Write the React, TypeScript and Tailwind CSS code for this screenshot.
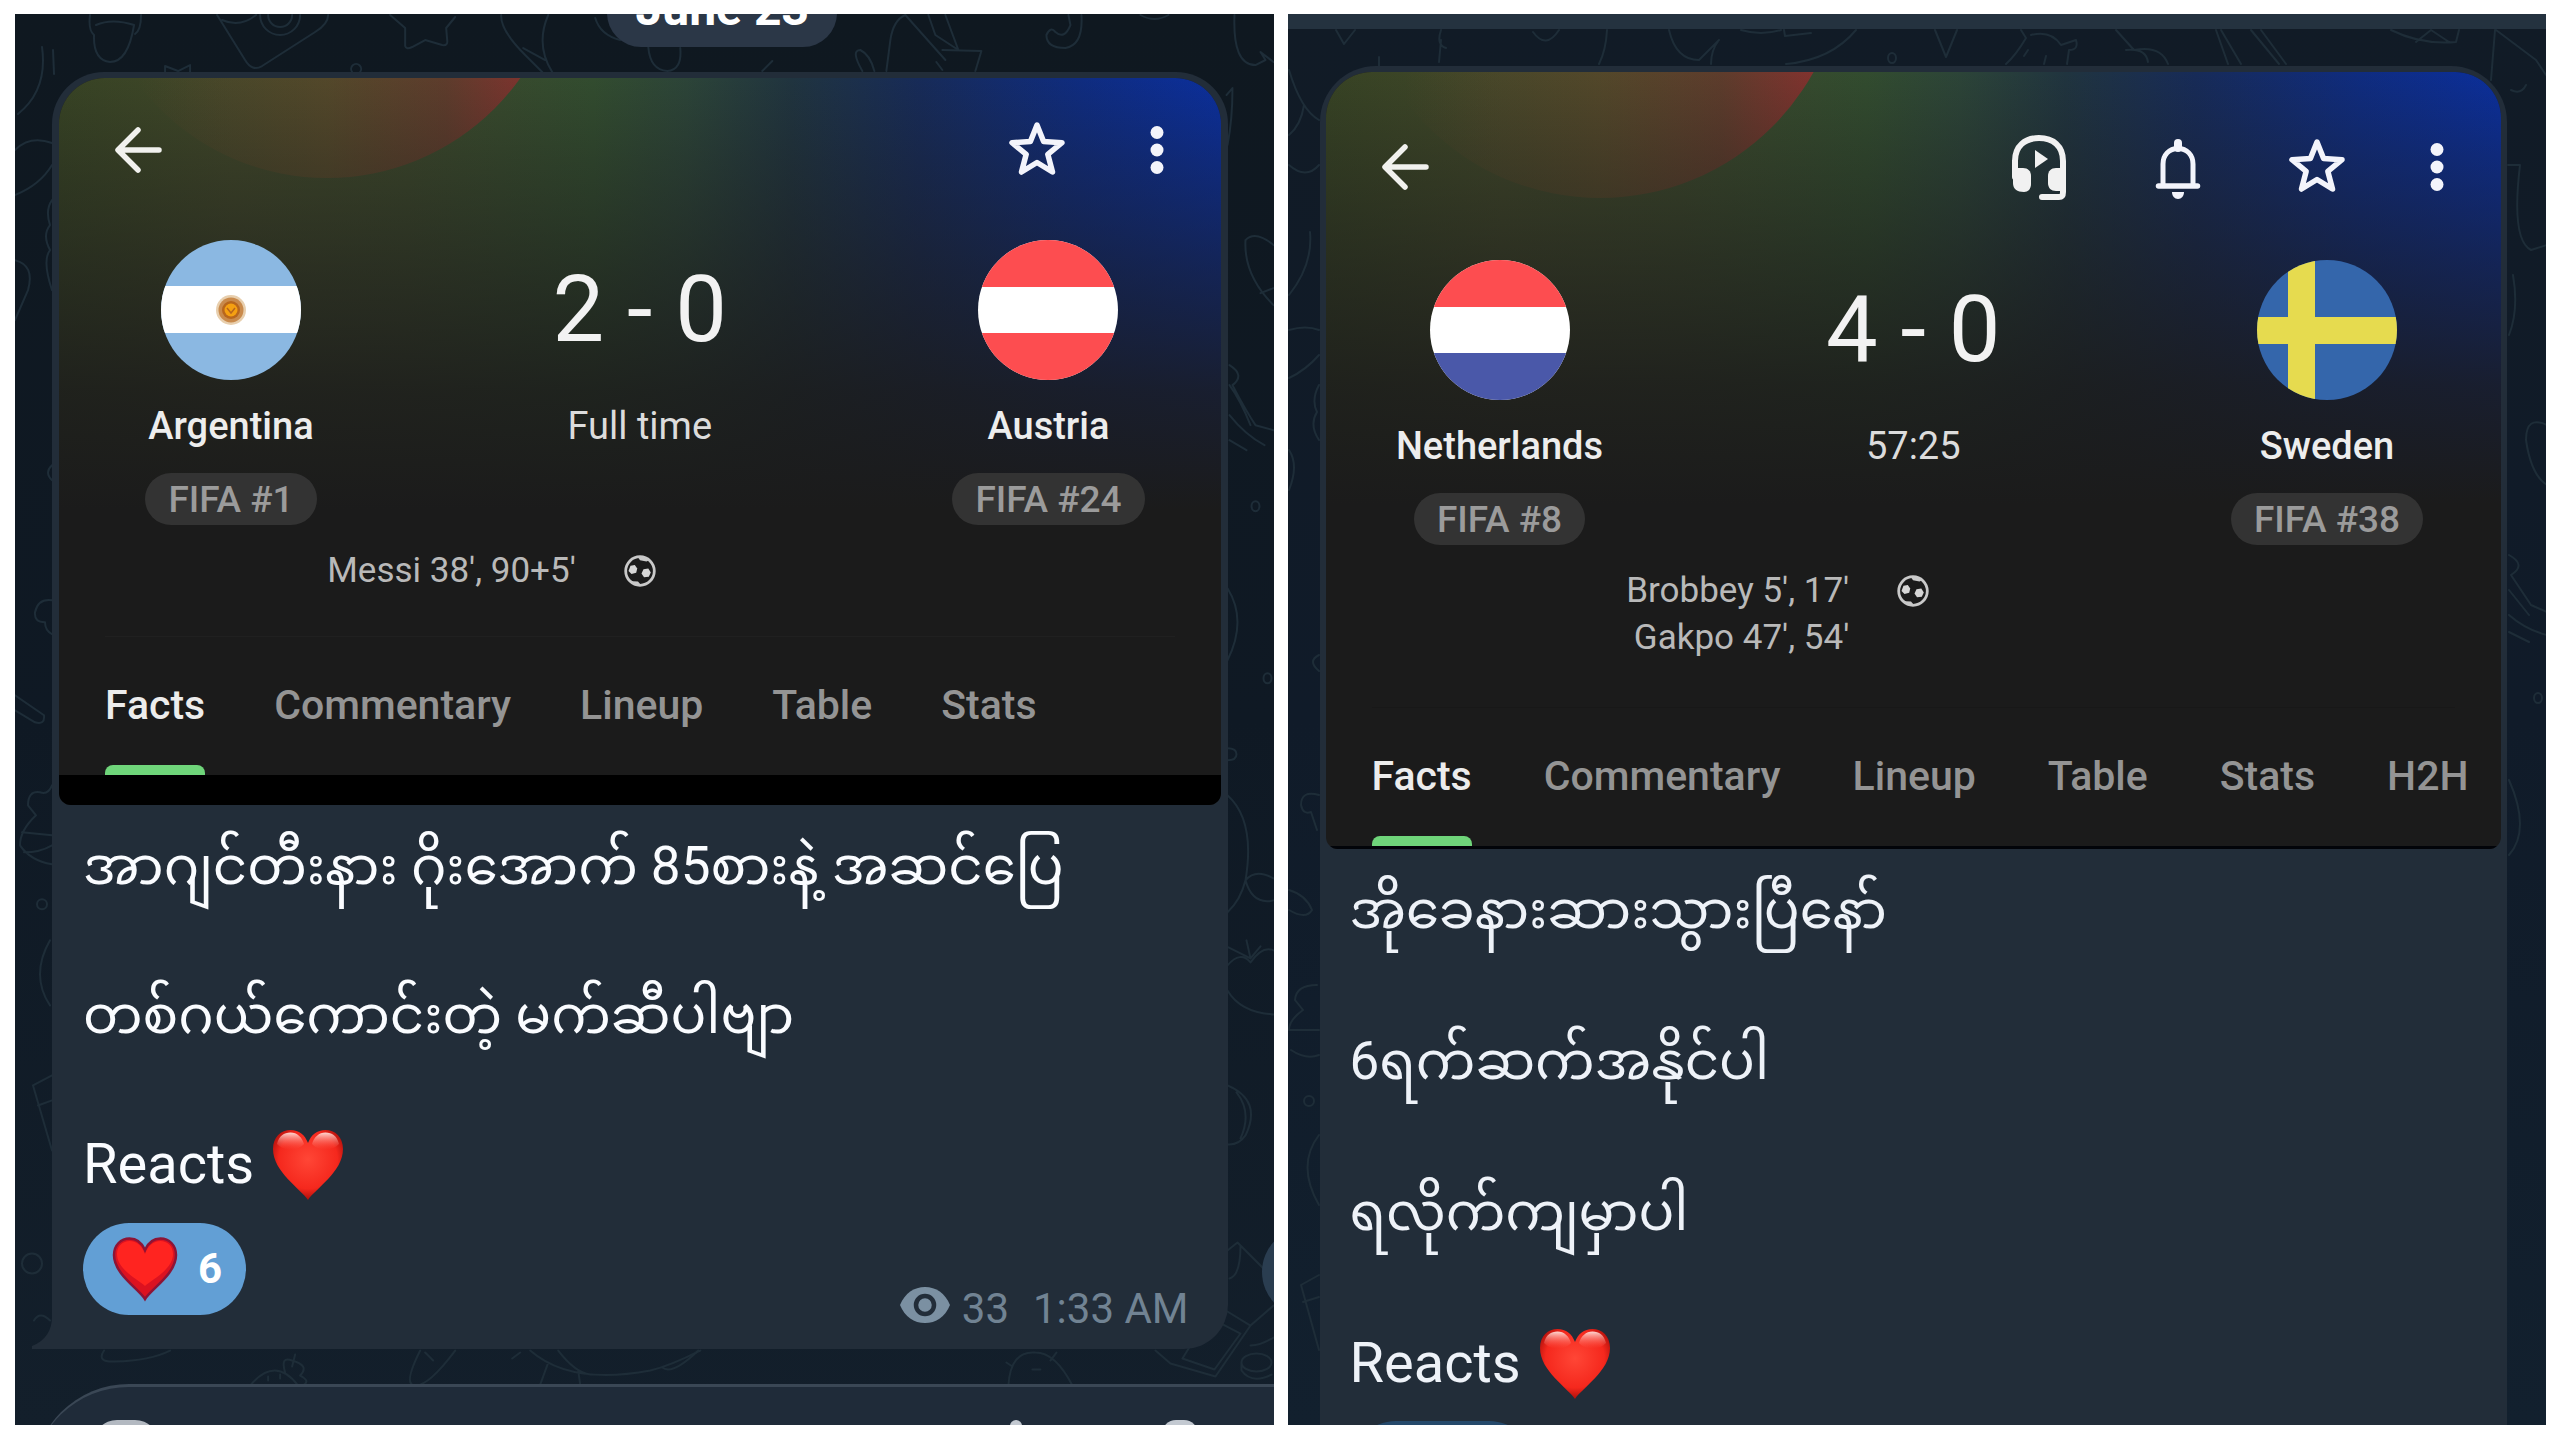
import React from "react";

type IconName = "headset" | "bell" | "star";

type Team = { name: string; rank: string; flag: React.ReactNode };

type Match = {
  home: Team;
  away: Team;
  score: string;
  status: string;
  scorers: string[];
  actions: IconName[];
  tabs: string[];
};

type CardStyles = { header: string; glow: string; teams: string; divider: string; tabs: string; footer: string };

function ArrowIcon() {
  return (
    <svg viewBox="0 0 64 64" className="size-16" fill="none" stroke="#f1f1ee" strokeWidth="5.5" strokeLinecap="round" strokeLinejoin="round" aria-hidden="true">
      <path d="M52 32H12M31 12L11 32l20 20" />
    </svg>
  );
}

function StarIcon() {
  return (
    <svg viewBox="0 2 64 64" className="size-16" fill="none" stroke="#f3f4fb" strokeWidth="5.5" strokeLinejoin="round" aria-hidden="true">
      <path d="M32 9l6.600 16.500 18.400 1.200-14.200 11.600L47.500 56 32 46.500 16.500 56l4.700-17.700L7 26.700l18.400-1.200z" />
    </svg>
  );
}

function BellIcon() {
  return (
    <svg viewBox="0 0 64 64" className="size-16" fill="none" stroke="#f3f4fb" strokeWidth="5" strokeLinecap="round" aria-hidden="true">
      <path d="M17 50V29c0-9 6-15.500 15-15.500S47 20 47 29v21" />
      <path d="M12.500 51h39" strokeWidth="5.500" />
      <path d="M32 13V8" strokeWidth="8" />
      <path d="M26 57h12c0 4-2.500 7-6 7s-6-3-6-7z" fill="#f3f4fb" stroke="none" />
    </svg>
  );
}

function HeadsetIcon() {
  return (
    <svg viewBox="0 0 64 64" className="size-16 overflow-visible" fill="none" stroke="#f1f1f1" strokeWidth="6" strokeLinecap="round" aria-hidden="true">
      <path d="M8 42V26C8 11 18 3 32 3s24 8 24 23v31c0 3-1 5-4 5H35" />
      <path d="M6 33h10c5 0 8 3 8 8v8c0 5-3 8-7 8-7 0-11-3-11-9z" fill="#f1f1f1" stroke="none" />
      <path d="M58 33H49c-5 0-8 3-8 8v7c0 5 3 8 8 8h9z" fill="#f1f1f1" stroke="none" />
      <path d="M28 15l13 9-13 9z" fill="#f1f1f1" stroke="none" />
    </svg>
  );
}

function DotsIcon() {
  return (
    <svg viewBox="0 0 64 64" className="size-16" fill="#f3f4fb" aria-hidden="true">
      <circle cx="32" cy="14.500" r="6.500" />
      <circle cx="32" cy="32" r="6.500" />
      <circle cx="32" cy="49.500" r="6.500" />
    </svg>
  );
}

function BallIcon() {
  return (
    <svg viewBox="0 0 32 32" className="size-8" role="img" aria-label="Goals">
      <circle cx="16" cy="16" r="14.300" fill="none" stroke="#c9c9c9" strokeWidth="2.800" />
      <path d="M6.500 10.800l4.300-.8 2.400 3.400-1 4.400-4.700 1.200-3-3z" fill="#d6d6d6" />
      <path d="M19.500 14.200l4.800-.6 2.500 4-2 4.200-4.800.4-2.500-3.800z" fill="#d6d6d6" />
      <path d="M13.500 1.500l2.500 3.700 6.500 1.200 3-1.400-5-3.500zM5.500 25l3.500 1.200 5 .2 3 3.600-6 .5z" fill="#c9c9c9" />
    </svg>
  );
}

function GlossyHeart() {
  return (
    <svg viewBox="0 0 72 72" className="size-[72px]" role="img" aria-label="Red heart">
      <defs>
        <radialGradient id="heartBody" cx="50%" cy="42%" r="60%">
          <stop offset="0" stopColor="#ff4636" />
          <stop offset="0.700" stopColor="#f5281d" />
          <stop offset="1" stopColor="#a50c08" />
        </radialGradient>
        <linearGradient id="heartShine" x1="0" x2="0" y1="0" y2="1">
          <stop offset="0" stopColor="#ffe1dc" stopOpacity="0.950" />
          <stop offset="1" stopColor="#ff5a4c" stopOpacity="0" />
        </linearGradient>
      </defs>
      <path d="M36 71C29 60 1 43 1 20 1 8 9 1 18.500 1 27 1 33 6 36 14 39 6 45 1 53.500 1 63 1 71 8 71 20c0 23-28 40-35 51z" fill="url(#heartBody)" />
      <path d="M5 15C7 7 12 3.500 18.500 3.500S30 8 32 15c-6 7-20 8-27 0zM67 15C65 7 60 3.500 53.500 3.500S42 8 40 15c6 7 20 8 27 0z" fill="url(#heartShine)" />
    </svg>
  );
}

function ReactionHeart() {
  return (
    <svg viewBox="0 0 66 66" className="size-[66px]" role="img" aria-label="Heart">
      <path d="M33 63C27 53 2 38 2 19 2 9 9 2.500 17.500 2.500 25 2.500 30 7 33 14 36 7 41 2.500 48.500 2.500 57 2.500 64 9 64 19c0 19-25 34-31 44z" fill="#dc1220" stroke="#8d1436" strokeWidth="2.500" />
      <path d="M33 50C27 44 5 34 5 18 5 10 11 5 17.500 5 25 5 30 10 33 18 36 10 41 5 48.500 5 55 5 61 10 61 18c0 16-22 26-28 32z" fill="#ff2420" />
    </svg>
  );
}

function EyeIcon() {
  return (
    <svg viewBox="0 0 50 36" className="h-9 w-[50px]" role="img" aria-label="Views">
      <path d="M0 18C5 6 14 0 25 0s20 6 25 18c-5 12-14 18-25 18S5 30 0 18z" fill="#7b90a2" />
      <circle cx="25" cy="18" r="9" fill="none" stroke="#222d39" strokeWidth="4.500" />
    </svg>
  );
}

function ArgentinaFlag() {
  return (
    <svg viewBox="0 0 140 140" className="size-full" role="img" aria-label="Flag of Argentina">
      <rect width="140" height="140" fill="#8bb8e2" />
      <rect y="46" width="140" height="47" fill="#fff" />
      <circle cx="70" cy="70" r="15" fill="#e8cfae" />
      <circle cx="70" cy="70" r="12.500" fill="#c98a4c" />
      <circle cx="70" cy="70" r="9" fill="#b8661c" />
      <circle cx="70" cy="70" r="6.500" fill="#f5a012" />
      <path d="M66 68l4 5 4-5" fill="none" stroke="#b8661c" strokeWidth="1.500" />
    </svg>
  );
}

function StripedFlag({ label, top, bottom }: { label: string; top: string; bottom: string }) {
  return (
    <svg viewBox="0 0 140 140" className="size-full" role="img" aria-label={label}>
      <rect width="140" height="140" fill="#fff" />
      <rect width="140" height="47" fill={top} />
      <rect y="93" width="140" height="47" fill={bottom} />
    </svg>
  );
}

function SwedenFlag() {
  return (
    <svg viewBox="0 0 140 140" className="size-full" role="img" aria-label="Flag of Sweden">
      <rect width="140" height="140" fill="#3466ab" />
      <path d="M31 0h27v57h82v27H58v56H31V84H0V57h31z" fill="#e6db4f" />
    </svg>
  );
}

const ICONS: Record<IconName, { label: string; icon: React.ReactNode }> = {
  headset: { label: "Audio commentary", icon: <HeadsetIcon /> },
  bell: { label: "Notifications", icon: <BellIcon /> },
  star: { label: "Favourite", icon: <StarIcon /> },
};

const LEFT_DOODLES = [
  "M90 15Q88 30 94 35Q93 60 110 62Q128 62 134 25Q112 18 96 25M141 15Q141 30 135 34",
  "M217 15L245 60Q252 72 262 66L315 32Q328 24 328 15M260 15a20 20 0 0 0 40 0M268 15a12 12 0 0 0 24 0M222 20q18 8 34-5",
  "M390 15L405 28V46Q406 50 412 47L425 40L442 45Q448 46 447 40L446 28L455 17",
  "M501 15Q500 30 525 55L542 72M548 15Q535 45 552 72M523 48L545 60M595 18Q600 35 620 40",
  "M42 47Q48 90 18 114M53 50L54 74M15 150Q30 135 52 143M15 195Q40 185 52 165M165 72V66L178 71L190 65V72",
  "M352 72a5 5 0 1 1 8 0M15 260Q35 265 28 290L15 320M52 200Q45 210 50 225Q42 235 50 250Q42 260 52 290M52 465Q44 472 52 480",
  "M648 47Q650 70 667 71Q682 70 680 48M762 71L772 61M886 71L890 40Q893 20 905 15L945 60M928 15L935 35L958 50M958 50L945 15",
  "M942 50L981 51L975 71M936 62L942 70M862 71Q850 50 860 50Q870 55 874 71M1046 35Q1046 48 1065 48Q1083 45 1081 15M1046 35Q1050 26 1055 32Q1064 40 1070 25L1068 15M1140 15q14 8 28 0",
  "M1234 15Q1232 65 1255 65L1265 60L1260 52L1273 62M1226 95L1232 88Q1232 120 1227 145M1245 240Q1255 230 1273 245M1245 240Q1243 275 1273 305M1260 293l13 -5",
  "M1229 365Q1245 375 1232 385Q1245 410 1255 425L1273 430M1229 385Q1240 400 1250 425M1229 415Q1245 435 1264 445M1229 440L1246 450",
  "M1251 506a4 5 0 1 0 8 0a4 5 0 1 0-8 0M1227 588Q1247 620 1227 660M1263 678a4 5 0 1 0 8 0a4 5 0 1 0-8 0M1227 748q9 0 9 6t-9 6",
  "M1227 795Q1255 820 1245 880Q1240 900 1227 912M1245 880Q1252 905 1273 900M1245 880Q1255 868 1273 878",
  "M52 600Q38 598 35 612Q34 622 45 622Q45 630 52 634M15 695L44 715Q45 725 35 722L15 710",
  "M52 785Q48 795 40 792Q28 790 28 805L36 815Q20 830 20 845Q30 860 52 864M22 832L52 835M24 852Q40 852 52 845M37 904a5 5 0 1 0 10 0a5 5 0 1 0-10 0",
  "M50 940Q30 975 50 1005M52 1075L33 1085L52 1150M38 1105L52 1100M22 1263a10 10 0 1 0 20 0a10 10 0 1 0-20 0M34 1320Q40 1310 50 1320",
  "M104 1350Q96 1362 115 1361Q150 1360 170 1350M250 1385Q275 1355 298 1385M285 1372Q280 1355 292 1360Q310 1365 300 1375Q310 1380 304 1384M292 1366l3-12M268 1376v4M280 1374v4",
  "M420 1350Q405 1380 412 1384Q425 1390 455 1350M425 1352l8 8M512 1358L520 1352M530 1350Q570 1385 650 1370Q670 1365 700 1350M558 1350Q575 1372 590 1374M548 1362L540 1384M578 1370l2 14",
  "M662 1367Q672 1375 698 1350M1008 1385Q1010 1350 1035 1352Q1055 1352 1072 1385M1032 1369h8M1050 1360l6-8M1006 1362l6 4",
  "M1227 965Q1240 950 1250 962Q1262 945 1273 950M1227 990Q1240 1012 1273 1014M1250 958L1228 947M1250 958L1246 940M1250 958l10-12",
  "M1227 1085Q1262 1100 1245 1135Q1238 1145 1227 1144M1236 1092q16 20 4 46M1227 1250L1237 1242L1265 1270M1240 1245Q1240 1275 1229 1278",
  "M1155 1350L1170 1363L1215 1376L1250 1325L1222 1308M1190 1345L1182 1358L1214 1369L1240 1333L1215 1320M1241 1362a15 9 0 1 0 30 0a15 9 0 1 0-30 0v8q10 14 30 4M1250 1345q10 0 23-8M1250 1325l23-20",
];

const RIGHT_DOODLES = [
  "M1335 30L1343 44L1354 30M1440 30Q1435 45 1445 48M1440 40L1438 62M1532 32Q1545 50 1558 30M1606 30Q1605 50 1598 64",
  "M1668 30Q1675 60 1698 60L1718 40Q1710 50 1710 64M1855 30Q1830 60 1785 64M1783 30L1784 36L1810 33M1740 30q20 6 40 0M1887 58a4 5 0 1 0 8 0a4 5 0 1 0-8 0",
  "M1378 57v10M1288 70Q1300 110 1318 120M1288 135Q1300 125 1303 105M1288 165Q1305 180 1318 165M1309 232Q1312 265 1288 295",
  "M1288 330Q1305 325 1318 330M1288 378Q1305 370 1318 355M1318 385Q1310 400 1316 412Q1308 425 1318 440M1288 450q10 15 0 40",
  "M1934 30L1945 57L1956 30M2005 64Q2015 55 2025 38L2020 30M2030 35Q2050 30 2060 45L2075 40Q2078 50 2068 50L2066 64M2027 50l-4 6M2045 56l-2 8",
  "M2115 30L2133 50Q2160 45 2167 64M2125 50Q2145 48 2147 62M2215 30L2227 64M2220 30L2240 64M2250 30L2278 64M2260 30L2285 64",
  "M2390 30Q2420 45 2455 42L2458 30M2415 42L2430 30M2430 30l18 12M2494 30L2490 80M2495 30L2535 60L2545 75M2510 90Q2520 95 2525 85",
  "M2507 165h12Q2510 240 2530 250L2546 245M2512 275Q2518 310 2508 335M2546 425Q2525 415 2525 440Q2530 475 2546 485",
  "M2508 555Q2526 565 2510 575Q2520 590 2530 605L2546 612M2508 590L2528 615M2508 615Q2525 630 2546 635M2508 632L2528 642M2533 698a4 5 0 1 0 8 0a4 5 0 1 0-8 0M2508 780Q2530 830 2508 855",
  "M1318 655q-12 6 0 16M1318 795Q1300 790 1300 805Q1302 815 1310 812L1316 830M1288 890Q1305 895 1311 910Q1305 920 1288 910",
  "M1316 985Q1295 985 1294 1000L1302 1010Q1288 1020 1288 1030H1318M1290 1050Q1305 1060 1318 1055M1303 1101a5 5 0 1 0 10 0a5 5 0 1 0-10 0",
  "M1318 1135Q1295 1165 1318 1205M1318 1275L1300 1285L1318 1350M1302 1302L1318 1297",
];

function Wallpaper({ paths, viewBox }: { paths: string[]; viewBox: string }) {
  return (
    <svg viewBox={viewBox} preserveAspectRatio="xMinYMin slice" className="absolute inset-0 size-full" fill="none" stroke="#1e2d38" strokeWidth="2" strokeLinecap="round" strokeLinejoin="round" aria-hidden="true">
      {paths.map((d) => (
        <path key={d} d={d} />
      ))}
    </svg>
  );
}

function TeamColumn({ team }: { team: Team }) {
  return (
    <div className="flex w-60 flex-col items-center">
      <div className="size-[140px] overflow-hidden rounded-full">{team.flag}</div>
      <h2 className="mt-[22px] text-[38px] leading-[48px] font-medium whitespace-nowrap text-[#ededed]">{team.name}</h2>
      <span className="mt-[23px] flex h-[52px] items-center rounded-full bg-[#333333] px-[23px] text-[37px] leading-none font-medium whitespace-nowrap text-[#9b9b9b]">
        {team.rank}
      </span>
    </div>
  );
}

function MatchCard({ match, styles }: { match: Match; styles: CardStyles }) {
  return (
    <section className="relative overflow-hidden rounded-t-[46px] rounded-b-[12px] bg-[#1b1b1b] font-['Roboto',sans-serif]">
      <div className="absolute inset-x-0 top-0 h-[460px] overflow-hidden" aria-hidden="true">
        <div className="absolute inset-0 bg-[linear-gradient(to_right,#374324_0%,#404729_15%,#3c482b_30%,#324c2f_46%,#2c4438_54%,#20343f_63%,#172b58_74%,#0f2c80_88%,#0b2f9c_100%)]" />
        <div className={styles.glow} />
        <div className="absolute inset-0 bg-[linear-gradient(to_bottom,#1b1b1b00_0%,#1b1b1b40_18%,#1b1b1b8c_42%,#1b1b1bd6_68%,#1b1b1b_94%)]" />
      </div>

      <div className="relative">
        <header className={styles.header}>
          <button type="button" aria-label="Back">
            <ArrowIcon />
          </button>
          <div className="flex items-center">
            <div className="flex gap-[75px]">
              {match.actions.map((name) => (
                <button key={name} type="button" aria-label={ICONS[name].label}>
                  {ICONS[name].icon}
                </button>
              ))}
            </div>
            <button type="button" aria-label="More options" className="ml-14">
              <DotsIcon />
            </button>
          </div>
        </header>

        <div className={styles.teams}>
          <TeamColumn team={match.home} />
          <div className="flex flex-col items-center">
            <div className="flex h-[140px] items-center text-[92px] leading-none whitespace-nowrap text-[#f2f2f2]">{match.score}</div>
            <p className="mt-[22px] text-[38px] leading-[48px] whitespace-nowrap text-[#dcdcdc]">{match.status}</p>
          </div>
          <TeamColumn team={match.away} />
        </div>

        <div className="mt-[22px] grid grid-cols-[1fr_auto_1fr] gap-12">
          <ul className="text-right text-[35px] leading-[47px] text-[#b9b9b9]">
            {match.scorers.map((scorer) => (
              <li key={scorer}>{scorer}</li>
            ))}
          </ul>
          <div className="pt-2">
            <BallIcon />
          </div>
        </div>

        <div className={styles.divider} />

        <nav className={styles.tabs}>
          {match.tabs.map((tab, i) => (
            <button
              key={tab}
              type="button"
              className={
                i === 0
                  ? "relative h-[138px] text-[41px] font-medium whitespace-nowrap text-[#ececec]"
                  : "h-[138px] text-[41px] font-medium whitespace-nowrap text-[#949494]"
              }
            >
              {tab}
              {i === 0 && <span className="absolute inset-x-0 bottom-0 h-[10px] rounded-t-[8px] bg-[#6fd57a]" />}
            </button>
          ))}
        </nav>
        <div className={styles.footer} />
      </div>
    </section>
  );
}

function ReactsLine() {
  return (
    <p className="flex items-center gap-[18px] text-[56px]">
      Reacts <GlossyHeart />
    </p>
  );
}

const ARGENTINA_AUSTRIA: Match = {
  home: { name: "Argentina", rank: "FIFA #1", flag: <ArgentinaFlag /> },
  away: { name: "Austria", rank: "FIFA #24", flag: <StripedFlag label="Flag of Austria" top="#fd4d50" bottom="#fd4d50" /> },
  score: "2 - 0",
  status: "Full time",
  scorers: ["Messi 38', 90+5'"],
  actions: ["star"],
  tabs: ["Facts", "Commentary", "Lineup", "Table", "Stats"],
};

const NETHERLANDS_SWEDEN: Match = {
  home: { name: "Netherlands", rank: "FIFA #8", flag: <StripedFlag label="Flag of the Netherlands" top="#fd4d50" bottom="#4a58a9" /> },
  away: { name: "Sweden", rank: "FIFA #38", flag: <SwedenFlag /> },
  score: "4 - 0",
  status: "57:25",
  scorers: ["Brobbey 5', 17'", "Gakpo 47', 54'"],
  actions: ["headset", "bell", "star"],
  tabs: ["Facts", "Commentary", "Lineup", "Table", "Stats", "H2H"],
};

const FINISHED_STYLES: CardStyles = {
  header: "flex items-center justify-between pt-[40px] pr-8 pl-12",
  glow: "absolute -top-[374px] left-[31px] size-[474px] rounded-full bg-[linear-gradient(to_right,#5a482800_10%,#5c482ab3_50%,#643a2cd9_75%,#8a302f_98%)]",
  teams: "mt-[58px] flex justify-between px-[52px]",
  divider: "mx-[46px] mt-[42px] h-px bg-[#202020]",
  tabs: "flex gap-[69px] overflow-hidden px-[46px]",
  footer: "h-[30px] bg-black",
};

const LIVE_STYLES: CardStyles = {
  header: "flex items-center justify-between pt-[63px] pr-8 pl-12",
  glow: "absolute -top-[362px] left-[30px] size-[488px] rounded-full bg-[linear-gradient(to_right,#5a482800_10%,#5c482ab3_50%,#643a2cd9_75%,#8a302f_98%)]",
  teams: "mt-[61px] flex justify-between px-[54px]",
  divider: "mx-[46px] mt-[46px] h-px bg-[#181818]",
  tabs: "flex gap-[72px] overflow-hidden px-[46px]",
  footer: "h-[3px] bg-[#020409]",
};

export default function App() {
  return (
    <main className="grid h-screen grid-cols-2 gap-[14px] bg-white pt-[14px] pr-[14px] pb-[15px] pl-[15px] font-['Roboto','Noto_Sans_Myanmar','Noto_Sans',sans-serif]">
      <section className="relative overflow-hidden bg-[linear-gradient(to_bottom,#0f1820,#0f1924_50%,#131f2b)]">
        <Wallpaper paths={LEFT_DOODLES} viewBox="15 14 1258 1411" />
        <div className="relative flex flex-col">
          <time className="-mt-[35px] ml-[156px] flex h-[68px] w-[230px] items-center justify-center self-center rounded-full bg-[#2b3747] pb-2 text-[48px] leading-none font-bold whitespace-nowrap text-white">
            June 23
          </time>

          <article className="relative mt-[25px] mr-[46px] ml-[37px] rounded-t-[52px] rounded-br-[44px] bg-[#222d39] px-[7px] pt-[6px] pb-[18px]">
            <svg viewBox="0 0 20 32" className="absolute bottom-0 -left-5 h-8 w-5" aria-hidden="true">
              <path d="M20 0C20 12 14 24 0 29v3h20z" fill="#222d39" />
            </svg>
            <MatchCard match={ARGENTINA_AUSTRIA} styles={FINISHED_STYLES} />
            <div className="px-6 pt-6">
              <div className="flex flex-col gap-[74px] text-[53px] leading-[75px] text-[#fafcff]">
                <p lang="my">အာဂျင်တီးနား ဂိုးအောက် 85စားနဲ့ အဆင်ပြေ</p>
                <p lang="my">တစ်ဂယ်ကောင်းတဲ့ မက်ဆီပါဗျာ</p>
                <ReactsLine />
              </div>
              <div className="mt-[21px] flex items-end justify-between">
                <button type="button" className="mb-4 flex h-[92px] items-center gap-5 rounded-full bg-[#629fd5] pr-6 pl-[29px] text-[42px] leading-none font-bold text-white">
                  <ReactionHeart />6
                </button>
                <div className="mr-2 flex items-center text-[42px] leading-10 text-[#718393]">
                  <div className="pb-2">
                    <EyeIcon />
                  </div>
                  <span className="ml-3">33</span>
                  <time className="ml-6">1:33 AM</time>
                </div>
              </div>
            </div>
          </article>

          <div className="mt-[35px] -mr-24 ml-[18px] flex h-[120px] justify-between rounded-tl-[96px] border-t-[3px] border-[#3a4755] bg-[#1f2b39] pt-[33px] pr-[172px] pl-[60px]">
            <div className="h-14 w-[66px] rounded-[24px] bg-[#b3b9c1]" />
            <div className="flex gap-[140px]">
              <div className="h-14 w-3 rounded-full bg-[#c3c9d1]" />
              <div className="h-14 w-9 rounded-[14px] bg-[#c3c9d1]" />
            </div>
          </div>
        </div>
        <div className="absolute -right-[78px] bottom-[108px] size-[90px] rounded-full bg-[#2a3d50]" />
      </section>

      <section className="relative overflow-hidden bg-[linear-gradient(to_bottom,#111b26,#101b29_50%,#12202e)]">
        <Wallpaper paths={RIGHT_DOODLES} viewBox="1287 14 1259 1411" />
        <div className="relative flex flex-col">
          <div className="h-[15px] bg-[#24323f]" />
          <article className="mt-[37px] mr-[39px] ml-[32px] rounded-t-[56px] bg-[#222d39] px-[6px] pt-[6px] pb-[34px]">
            <MatchCard match={NETHERLANDS_SWEDEN} styles={LIVE_STYLES} />
            <div className="px-6 pt-6">
              <div className="flex flex-col gap-[76px] text-[53px] leading-[75px] text-[#eef2f8]">
                <p lang="my">အိုခေနားဆားသွားပြီနော်</p>
                <p lang="my">6ရက်ဆက်အနိုင်ပါ</p>
                <p lang="my">ရလိုက်ကျမှာပါ</p>
                <ReactsLine />
              </div>
              <button type="button" className="mt-5 flex h-[92px] items-center rounded-full bg-[#25496b] pr-[90px] pl-[29px]" aria-label="Heart reactions">
                <ReactionHeart />
              </button>
            </div>
          </article>
        </div>
      </section>
    </main>
  );
}
